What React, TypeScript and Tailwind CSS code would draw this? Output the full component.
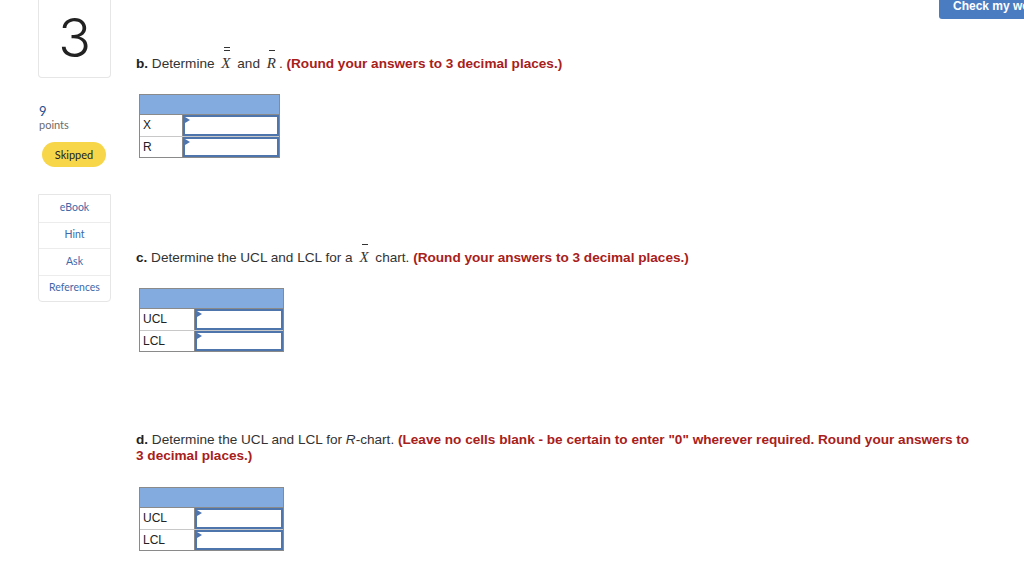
import React from "react";

const font = "font-['Liberation_Sans',Arial,sans-serif]";

function XBar({ double }: { double?: boolean }) {
  return (
    <span className="relative inline-block font-['Liberation_Serif',serif] italic text-[15px] leading-none mx-[3px] text-[#333]">
      X
      <span className="absolute left-[3px] right-[1px] -top-[6px] h-px bg-[#333]" />
      {double && <span className="absolute left-[3px] right-[1px] -top-[9px] h-px bg-[#333]" />}
    </span>
  );
}

function RBar() {
  return (
    <span className="relative inline-block font-['Liberation_Serif',serif] italic text-[15px] leading-none mx-[3px] text-[#333]">
      R
      <span className="absolute left-[2px] right-[1px] -top-[6px] h-px bg-[#333]" />
    </span>
  );
}

function AnswerTable({ rows, labelW, w }: { rows: string[]; labelW: string; w: string }) {
  return (
    <div className={`${w} border border-[#8a8a8a]`}>
      <div className="h-[20px] bg-[#84abe0] border-b border-[#8a8a8a]" />
      {rows.map((r, i) => (
        <div key={r} className={`flex h-[21px] ${i > 0 ? "border-t border-[#c8c8c8]" : ""}`}>
          <div className={`${labelW} border-r border-[#8a8a8a] px-[3px] text-[12px] leading-[20px] text-[#222] font-['Liberation_Sans',sans-serif]`}>
            {r}
          </div>
          <div className="relative flex-1 border-2 border-[#4f75ad] bg-white">
            <span className="absolute left-0 top-0 w-0 h-0 border-t-[3px] border-b-[3px] border-l-[5px] border-t-transparent border-b-transparent border-l-[#4f75ad]" />
          </div>
        </div>
      ))}
    </div>
  );
}

export default function App() {
  return (
    <div className={`relative w-[1024px] h-[563px] overflow-hidden bg-white ${font}`}>
      {/* Check my work button */}
      <div className="absolute left-[939px] top-[-6px] h-[25px] w-[120px] rounded-[3px] bg-[#4a7cc2] pl-[14px] pt-[3px] text-[12px] font-bold text-white whitespace-nowrap">
        Check my work
      </div>

      <div className="flex">
        {/* Left column */}
        <div className="ml-[38px] w-[73px] flex flex-col font-['Lato',sans-serif]">
          <div className="h-[78px] border border-t-0 border-[#e6e6e6] rounded-b-[4px] flex items-center justify-center">
            <span className="font-['Inter',sans-serif] font-light text-[54px] leading-none text-[#222] mt-[-2px]">3</span>
          </div>
          <div className="mt-[27px] text-[13px] leading-[13px] text-[#1f4f8f] pl-[1px]">9</div>
          <div className="text-[11px] leading-[14px] text-[#6b6b6b] pl-[1px]">points</div>
          <div className="mt-[10px] ml-[4px] w-[64px] h-[25px] rounded-full bg-[#f7d64a] text-[11px] leading-[25px] text-center text-[#222]">
            Skipped
          </div>
          <div className="mt-[27px] border border-[#e6e6e6] rounded-b-[4px] flex flex-col">
            {["eBook", "Hint", "Ask", "References"].map((l, i) => (
              <div
                key={l}
                className={`h-[26.5px] flex items-center justify-center text-[10.5px] text-[#3f68a8] ${i > 0 ? "border-t border-[#ececec]" : ""}`}
              >
                {l}
              </div>
            ))}
          </div>
        </div>

        {/* Main content */}
        <div className="ml-[25px] flex-1 pr-[46px] text-[13.6px] text-[#333]">
          <div className="mt-[55px] h-[18px] leading-[18px] whitespace-nowrap">
            <b className="text-[#222]">b.</b> Determine <XBar double /> and <RBar />.{" "}
            <b className="text-[#a8201a]">(Round your answers to 3 decimal places.)</b>
          </div>
          <div className="mt-[21px] ml-[3px]">
            <AnswerTable rows={["X", "R"]} labelW="w-[43px]" w="w-[141px]" />
          </div>

          <div className="mt-[91px] h-[18px] leading-[18px] whitespace-nowrap">
            <b className="text-[#222]">c.</b> Determine the UCL and LCL for a <XBar /> chart.{" "}
            <b className="text-[#a8201a]">(Round your answers to 3 decimal places.)</b>
          </div>
          <div className="mt-[21px] ml-[3px]">
            <AnswerTable rows={["UCL", "LCL"]} labelW="w-[55px]" w="w-[145px]" />
          </div>

          <div className="mt-[80px] leading-[16px]">
            <b className="text-[#222]">d.</b> Determine the UCL and LCL for <i>R</i>-chart.{" "}
            <b className="text-[#a8201a]">
              (Leave no cells blank - be certain to enter "0" wherever required. Round your answers to 3 decimal places.)
            </b>
          </div>
          <div className="mt-[23px] ml-[3px]">
            <AnswerTable rows={["UCL", "LCL"]} labelW="w-[55px]" w="w-[145px]" />
          </div>
        </div>
      </div>
    </div>
  );
}
